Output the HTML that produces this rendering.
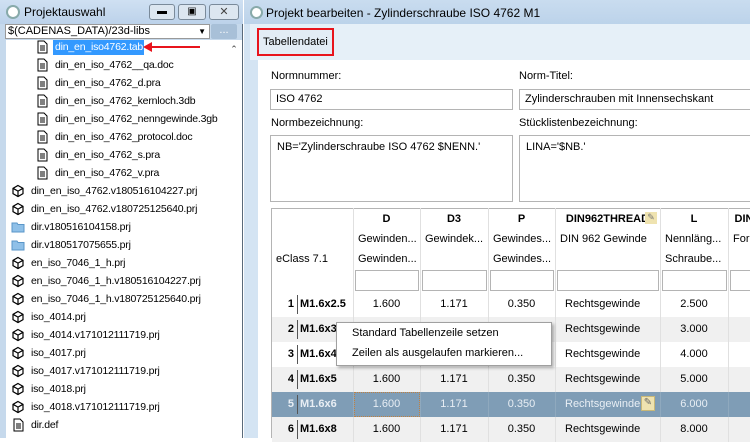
<!DOCTYPE html><html><head><meta charset="utf-8"><style>
*{margin:0;padding:0;box-sizing:border-box}
body{width:750px;height:438px;overflow:hidden;background:#fff;font-family:"Liberation Sans",sans-serif;font-size:11px;color:#000;position:relative}
.a{position:absolute;white-space:nowrap}
.row{position:absolute;left:31px;height:18px;line-height:18px;font-size:10.5px;letter-spacing:-0.2px}
.ic{position:absolute;left:-20px;top:2px;width:14px;height:14px}
.inp{position:absolute;border:1px solid #b4b4b4;background:#fff;padding:3px 5px;font-size:11px}
.tc{position:absolute;text-align:center;font-size:11px}
</style></head><body>
<div class="a" style="left:0;top:0;width:243px;height:438px;background:#c6d9ec;border-right:1px solid #5a6a7a"></div>
<div class="a" style="left:0;top:0;width:243px;height:24px;background:linear-gradient(#cfe0f2,#bcd2ea)"></div>
<div class="a" style="left:6px;top:5px;width:14px;height:14px;border-radius:50%;border:2px solid #8aa;background:#fff"></div>
<div class="a" style="left:24px;top:5px;font-size:12px">Projektauswahl</div>
<div class="a" style="left:149px;top:4px;width:26px;height:16px;border:1px solid #7a8a9a;border-radius:3px;background:#dce6f0;text-align:center;font-size:10px;line-height:14px">▬</div>
<div class="a" style="left:178px;top:4px;width:28px;height:16px;border:1px solid #7a8a9a;border-radius:3px;background:#dce6f0;text-align:center;font-size:10px;line-height:14px">▣</div>
<div class="a" style="left:209px;top:4px;width:30px;height:16px;border:1px solid #7a8a9a;border-radius:3px;background:#dce6f0;text-align:center;font-size:11px;line-height:14px;color:#444">✕</div>
<div class="a" style="left:5px;top:24px;width:205px;height:15px;background:#fff;border:1px solid #999;font-size:11px;line-height:13px;padding-left:2px">$(CADENAS_DATA)/23d-libs<span style="position:absolute;right:3px;top:0;font-size:8px">▼</span></div>
<div class="a" style="left:211px;top:24px;width:26px;height:15px;background:#a8c0d8;border-radius:2px;text-align:center;color:#fff;line-height:12px">...</div>
<div class="a" style="left:6px;top:40px;width:236px;height:398px;background:#fff"></div>
<div class="a" style="left:226px;top:40px;width:16px;height:398px;background:#fff;font-size:9px;text-align:center;color:#444;padding-top:4px">⌃</div>
<div class="a" style="left:53px;top:40px;width:91px;height:15px;background:#3399ff"></div>
<div id="list"></div>
<div class="a" style="left:150px;top:46px;width:50px;height:2px;background:#e8141c"></div>
<div class="a" style="left:143px;top:42px;width:0;height:0;border-top:5px solid transparent;border-bottom:5px solid transparent;border-right:9px solid #e8141c"></div>
<div class="a" style="left:244px;top:0;width:506px;height:438px;background:#d4e4f3"></div>
<div class="a" style="left:244px;top:0;width:506px;height:24px;background:linear-gradient(#c9dcef,#bcd3ea)"></div>
<div class="a" style="left:250px;top:6px;width:13px;height:13px;border-radius:50%;border:2px solid #8aa;background:#fff"></div>
<div class="a" style="left:266px;top:6px;font-size:12px">Projekt bearbeiten - Zylinderschraube ISO 4762 M1</div>
<div class="a" style="left:250px;top:24px;width:500px;height:36px;background:#e6f0f8"></div>
<div class="a" style="left:257px;top:28px;width:77px;height:28px;border:2px solid #e8141c;background:#e2ecf5;font-size:11px;line-height:24px;padding-left:4px">Tabellendatei</div>
<div class="a" style="left:258px;top:60px;width:492px;height:378px;background:#fff"></div>
<div class="a" style="left:271px;top:70px;font-size:11px">Normnummer:</div>
<div class="a" style="left:519px;top:70px;font-size:11px">Norm-Titel:</div>
<div class="inp" style="left:270px;top:89px;width:243px;height:21px">ISO 4762</div>
<div class="inp" style="left:519px;top:89px;width:240px;height:21px">Zylinderschrauben mit Innensechskant</div>
<div class="a" style="left:271px;top:117px">Normbezeichnung:</div>
<div class="a" style="left:519px;top:117px">Stücklistenbezeichnung:</div>
<div class="inp" style="left:270px;top:135px;width:243px;height:67px;padding:5px 6px">NB='Zylinderschraube ISO 4762 $NENN.'</div>
<div class="inp" style="left:519px;top:135px;width:240px;height:67px;padding:5px 6px">LINA='$NB.'</div>
<div class="a" style="left:271px;top:208px;width:479px;height:230px;border:1px solid #b4b4b4;border-right:none;border-bottom:none"></div>
<div id="tbl"></div>
<div class="a" style="left:336px;top:322px;width:216px;height:44px;background:#fff;border:1px solid #a0a0a0;box-shadow:2px 2px 3px rgba(0,0,0,.3)"></div>
<div class="a" style="left:352px;top:327px">Standard Tabellenzeile setzen</div>
<div class="a" style="left:352px;top:347px">Zeilen als ausgelaufen markieren...</div>
<script>
var L=[["din_en_iso4762.tab","f",1],["din_en_iso_4762__qa.doc","f",1],["din_en_iso_4762_d.pra","f",1],["din_en_iso_4762_kernloch.3db","f",1],["din_en_iso_4762_nenngewinde.3gb","f",1],["din_en_iso_4762_protocol.doc","f",1],["din_en_iso_4762_s.pra","f",1],["din_en_iso_4762_v.pra","f",1],["din_en_iso_4762.v180516104227.prj","c"],["din_en_iso_4762.v180725125640.prj","c"],["dir.v180516104158.prj","d"],["dir.v180517075655.prj","d"],["en_iso_7046_1_h.prj","c"],["en_iso_7046_1_h.v180516104227.prj","c"],["en_iso_7046_1_h.v180725125640.prj","c"],["iso_4014.prj","c"],["iso_4014.v171012111719.prj","c"],["iso_4017.prj","c"],["iso_4017.v171012111719.prj","c"],["iso_4018.prj","c"],["iso_4018.v171012111719.prj","c"],["dir.def","f"]];
var h="";L.forEach(function(r,i){var y=38+i*18,x=r[2]?55:31,ic;
if(r[1]=="f")ic='<svg class="ic" viewBox="0 0 14 14"><path d="M3 1h6l3 3v9H3z" fill="#fff" stroke="#000"/><path d="M5 6h5M5 8h5M5 10h5" stroke="#000"/></svg>';
else if(r[1]=="c")ic='<svg class="ic" viewBox="0 0 14 14" fill="none" stroke="#000" stroke-width="1.2"><path d="M7 1.5l5 2.8v5.4L7 12.5 2 9.7V4.3zM2 4.3l5 2.8 5-2.8M7 7.1v5.4"/></svg>';
else ic='<svg class="ic" viewBox="0 0 14 14"><path d="M1 3h5l1 1.5h6V12H1z" fill="#8fc0e8" stroke="#5a96c8"/></svg>';
h+='<div class="row" style="left:'+x+'px;top:'+y+'px;'+(i==0?'color:#fff':'')+'">'+ic+r[0]+'</div>';});
document.getElementById("list").innerHTML=h;
var c=[271,353,420,488,555,660,728,760];t="";
var hd=[["",""],["D","Gewinden...","Gewinden..."],["D3","Gewindek..."],["P","Gewindes...","Gewindes..."],["DIN962THREAD","DIN 962 Gewinde"],["L","Nennläng...","Schraube..."],["DIN","Forr"]];
for(var j=1;j<7;j++){var x=c[j],w=c[j+1]-c[j];t+='<div class="a" style="left:'+x+'px;top:208px;width:1px;height:230px;background:#e0e0e0"></div>';
t+='<div class="tc" style="left:'+x+'px;top:213px;width:'+w+'px;font-weight:bold">'+hd[j][0]+'</div>';
if(hd[j][1])t+='<div class="a" style="left:'+(x+5)+'px;top:233px">'+hd[j][1]+'</div>';
if(hd[j][2])t+='<div class="a" style="left:'+(x+5)+'px;top:253px">'+hd[j][2]+'</div>';
t+='<div class="a" style="left:'+(x+2)+'px;top:270px;width:'+(w-3)+'px;height:21px;border:1px solid #b4b4b4"></div>';}
t+='<div class="a" style="left:645px;top:212px;width:12px;height:12px;background:#efe3b0;font-size:9px;color:#777;text-align:center">✎</div>';
t+='<div class="a" style="left:276px;top:253px">eClass 7.1</div>';
var rows=[["M1.6x2.5","2.500"],["M1.6x3","3.000"],["M1.6x4","4.000"],["M1.6x5","5.000"],["M1.6x6","6.000"],["M1.6x8","8.000"]];
rows.forEach(function(r,i){var y=292+i*25,sel=i==4,bg=sel?"#7f9db6":(i%2?"#f0f0f0":"#fff"),col=sel?"#e8eef4":"#000";
t+='<div class="a" style="left:272px;top:'+y+'px;width:478px;height:25px;background:'+bg+'"></div>';
t+='<div class="a" style="left:272px;top:'+(y+6)+'px;width:22px;text-align:right;font-weight:bold;color:'+col+'">'+(i+1)+'</div><div class="a" style="left:297px;top:'+(y+3)+'px;width:1px;height:19px;background:#555"></div><div class="a" style="left:300px;top:'+(y+6)+'px;font-weight:bold;color:'+col+'">'+r[0]+'</div>';
var v=["1.600","1.171","0.350"];for(var j=0;j<3;j++)t+='<div class="tc" style="left:'+c[j+1]+'px;top:'+(y+6)+'px;width:'+(c[j+2]-c[j+1])+'px;color:'+col+'">'+v[j]+'</div>';
t+='<div class="a" style="left:565px;top:'+(y+6)+'px;color:'+col+'">Rechtsgewinde</div>';
t+='<div class="tc" style="left:660px;top:'+(y+6)+'px;width:68px;color:'+col+'">'+r[1]+'</div>';
for(var j=1;j<7;j++)t+='<div class="a" style="left:'+c[j]+'px;top:'+y+'px;width:1px;height:25px;background:'+(sel?'#8fa9be':'#e0e0e0')+'"></div>';});
t+='<div class="a" style="left:354px;top:392px;width:66px;height:25px;border:1px dotted #c08040"></div>';
t+='<div class="a" style="left:641px;top:396px;width:14px;height:15px;background:#efe3b0;border:1px solid #c8b878;font-size:10px;color:#666;text-align:center">✎</div>';
document.getElementById("tbl").innerHTML=t;
</script>
</body></html>
